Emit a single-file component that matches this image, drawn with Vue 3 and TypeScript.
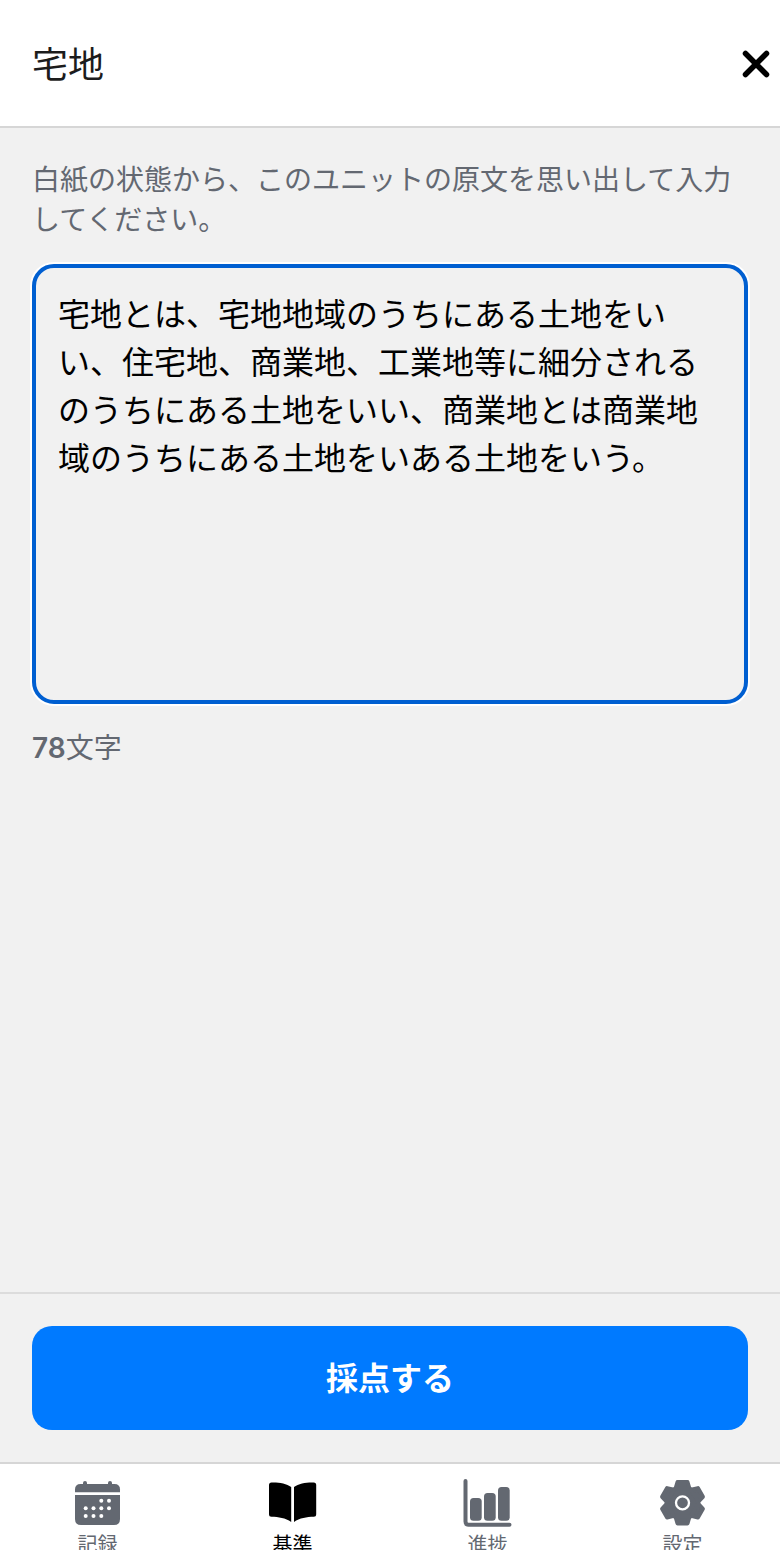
<script setup lang="ts">
import { computed, ref } from 'vue'

type IconName = 'calendar' | 'book' | 'chart' | 'gear'

interface Tab {
  icon: IconName
  label: string
  href: string
}

const title = '宅地'
const answer = ref(
  '宅地とは、宅地地域のうちにある土地をいい、住宅地、商業地、工業地等に細分されるのうちにある土地をいい、商業地とは商業地域のうちにある土地をいある土地をいう。',
)
const count = computed(() => answer.value.length)

const tabs: Tab[] = [
  { icon: 'calendar', label: '記録', href: '#records' },
  { icon: 'book', label: '基準', href: '#standards' },
  { icon: 'chart', label: '進捗', href: '#progress' },
  { icon: 'gear', label: '設定', href: '#settings' },
]
const current = ref<IconName>('book')

const dots = [
  [27.8, 22.7], [35.5, 22.7],
  [12.2, 30.3], [20, 30.3], [27.8, 30.3], [35.5, 30.3],
  [12.2, 38], [20, 38], [27.8, 38],
]
const teeth = [0, 60, 120, 180, 240, 300]
</script>

<template>
  <div class="screen">
    <header class="header">
      <h1 class="title">{{ title }}</h1>
      <button class="close" type="button" aria-label="閉じる">
        <svg viewBox="0 0 28 28" aria-hidden="true">
          <path d="M3.5 3.5 24.5 24.5M24.5 3.5 3.5 24.5" />
        </svg>
      </button>
    </header>

    <main class="content">
      <label class="prompt" for="answer">白紙の状態から、このユニットの原文を思い出して入力してください。</label>
      <textarea id="answer" v-model="answer" class="answer" spellcheck="false"></textarea>
      <p class="count"><span class="number">{{ count }}</span>文字</p>
    </main>

    <footer class="actions">
      <button class="submit" type="button">採点する</button>
    </footer>

    <nav class="tabbar">
      <div class="tabs">
        <a
          v-for="tab in tabs"
          :key="tab.icon"
          class="tab"
          :class="{ active: tab.icon === current }"
          :href="tab.href"
          @click.prevent="current = tab.icon"
        >
          <svg v-if="tab.icon === 'calendar'" class="icon" viewBox="0.5 0 48 48" aria-hidden="true">
            <path d="M9.500 7V5a2 2 0 0 1 4 0v2zM34.500 7V5a2 2 0 0 1 4 0v2z" />
            <path d="M7 6H41Q46.500 6 46.500 11.500V14.300H1.500V11.500Q1.500 6 7 6Z" />
            <path d="M1.500 17H46.500V41Q46.500 47 40.500 47H7.500Q1.500 47 1.500 41Z" />
            <circle v-for="(dot, i) in dots" :key="i" class="hole" :cx="dot[0]" :cy="dot[1]" r="2" />
          </svg>
          <svg v-else-if="tab.icon === 'book'" class="icon" viewBox="0.5 0 48 48" aria-hidden="true">
            <path d="M3 4.500C10 4.200 18 5.500 22.700 9V44C17 40 10 38.900 3 38.800Q.500 38.800 .500 36.300V7Q.500 4.500 3 4.500Z" />
            <path d="M45.200 4.500C38.200 4.200 30.200 5.500 25.500 9V44C31.200 40 38.200 38.900 45.200 38.800Q47.700 38.800 47.700 36.300V7Q47.700 4.500 45.200 4.500Z" />
          </svg>
          <svg v-else-if="tab.icon === 'chart'" class="icon" viewBox="0.5 0 48 48" aria-hidden="true">
            <path class="axis" d="M2 3V43.500Q2 46.700 5 46.700H46" />
            <rect x="6.500" y="20" width="11.700" height="22.700" rx="3.500" />
            <rect x="20.500" y="15" width="11.700" height="27.700" rx="3.500" />
            <rect x="34.500" y="9" width="11.700" height="33.700" rx="3.500" />
          </svg>
          <svg v-else class="icon" viewBox="0.5 0 48 48" aria-hidden="true">
            <g transform="translate(24 24.800)">
              <circle r="17.800" />
              <path
                v-for="angle in teeth"
                :key="angle"
                class="tooth"
                d="M-5-20.700H5L7-14H-7Z"
                :transform="`rotate(${angle})`"
              />
              <circle class="ring" r="6.500" />
            </g>
          </svg>
          <span class="label">{{ tab.label }}</span>
        </a>
      </div>
    </nav>
  </div>
</template>

<style>
body {
  margin: 0;
}
</style>

<style scoped>
.screen {
  box-sizing: border-box;
  display: flex;
  flex-direction: column;
  min-height: 100vh;
  background: #f1f1f1;
  color: #1c1c1c;
  font-family: Inter, "Noto Sans CJK JP", sans-serif;
}

.screen * {
  box-sizing: border-box;
}

.header {
  display: flex;
  align-items: center;
  justify-content: space-between;
  height: 128px;
  padding: 2px 10px 0 32px;
  border-bottom: 2px solid #d6d6d6;
  background: #fff;
}

.title {
  margin: 0;
  padding-top: 2px;
  font-size: 36px;
  font-weight: 400;
  line-height: 48px;
}

.close {
  display: flex;
  padding: 0;
  border: 0;
  background: none;
  cursor: pointer;
}

.close svg {
  width: 28px;
  height: 28px;
  fill: none;
  stroke: #000;
  stroke-width: 5.5;
  stroke-linecap: round;
}

.content {
  display: flex;
  flex: 1;
  flex-direction: column;
  padding: 32px;
}

.prompt {
  color: #636871;
  font-size: 28px;
  line-height: 40px;
}

.answer {
  display: block;
  width: 100%;
  height: 440px;
  margin: 24px 0;
  padding: 23px 22px 22px;
  border: 4px solid #005fd1;
  border-radius: 22px;
  outline: 0;
  box-shadow: 0 0 0 2px #fff;
  background: #f1f1f1;
  color: #000;
  font-family: inherit;
  font-size: 32px;
  line-height: 48px;
  resize: none;
}

.count {
  margin: 0;
  color: #636871;
  font-size: 28px;
  line-height: 40px;
}

.number {
  font-weight: 600;
}

.actions {
  padding: 32px;
  border-top: 2px solid #dcdcdc;
}

.submit {
  display: block;
  width: 100%;
  height: 104px;
  padding: 2px 0 0;
  border: 0;
  border-radius: 20px;
  background: #007aff;
  color: #fff;
  font-family: inherit;
  font-size: 32px;
  font-weight: 700;
  line-height: 48px;
  cursor: pointer;
}

.tabbar {
  padding-bottom: 10px;
  border-top: 2px solid #d6d6d6;
  background: #fff;
}

.tabs {
  display: grid;
  grid-template-columns: repeat(4, 1fr);
  height: 86px;
  overflow: hidden;
}

.tab {
  display: flex;
  flex-direction: column;
  align-items: center;
  gap: 5px;
  padding-top: 14px;
  color: #636871;
  text-decoration: none;
}

.tab.active {
  color: #000;
}

.icon {
  flex: none;
  width: 48px;
  height: 48px;
  overflow: visible;
  fill: currentColor;
}

.hole {
  fill: #fff;
}

.axis {
  fill: none;
  stroke: currentColor;
  stroke-width: 4;
  stroke-linecap: round;
}

.tooth {
  stroke: currentColor;
  stroke-width: 4;
  stroke-linejoin: round;
}

.ring {
  fill: none;
  stroke: #fff;
  stroke-width: 2.3;
}

.label {
  font-size: 20px;
  line-height: 28px;
}
</style>
